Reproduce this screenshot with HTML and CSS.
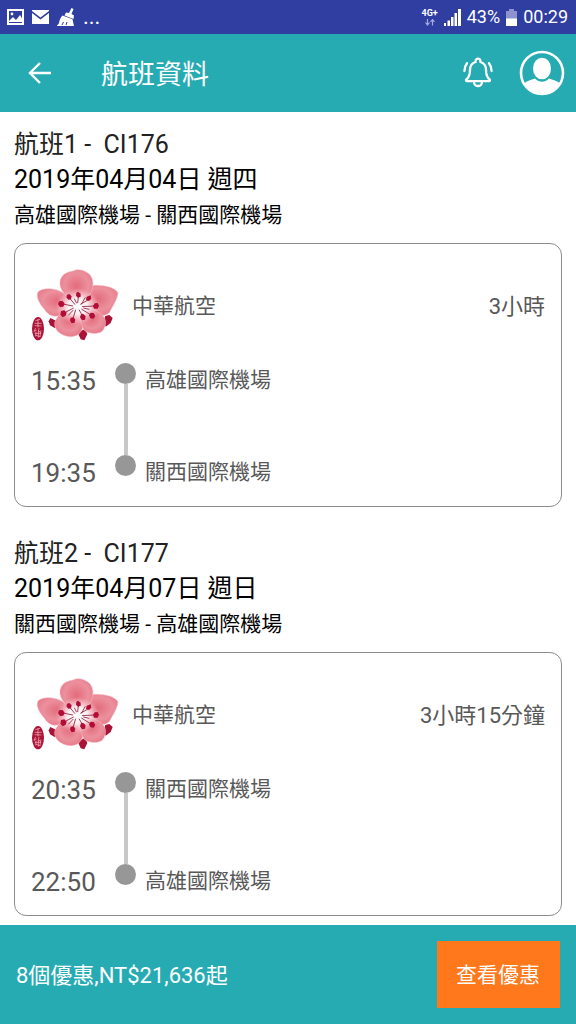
FILE: index.html
```html
<!DOCTYPE html>
<html lang="zh-Hant">
<head>
<meta charset="utf-8">
<meta name="viewport" content="width=device-width, initial-scale=1">
<title>航班資料</title>
<link rel="stylesheet" href="styles.css">
</head>
<body>
<svg class="defs" aria-hidden="true">
  <defs>
    <radialGradient id="petal" cx="50%" cy="45%" r="60%">
      <stop offset="0" stop-color="#e36c7c"/>
      <stop offset="0.6" stop-color="#ec909d"/>
      <stop offset="1" stop-color="#e67888"/>
    </radialGradient>
    <radialGradient id="heart" cx="50%" cy="50%" r="50%">
      <stop offset="0" stop-color="#fff"/>
      <stop offset="0.45" stop-color="#fff" stop-opacity="0.85"/>
      <stop offset="1" stop-color="#fbd5da" stop-opacity="0"/>
    </radialGradient>
    <symbol id="plum" viewBox="33 21 264 228">
      <g fill="#a81338">
        <path d="M91 174l17 8 5 16-9 6-14-8-4-12z"/>
        <path d="M256 168l12-3 10 9-6 15-15 11-7-14z"/>
        <path d="M173 217l22-10 7 15-9 19-11-3z"/>
      </g>
      <g fill="url(#petal)" stroke="#f6c3ca" stroke-width="1.500">
        <path d="M132 160C104 178 84 166 72 146C60 134 46 110 54 96C66 84 88 84 112 90C134 98 156 116 172 138Z"/>
        <path d="M172 138C180 104 196 84 222 76C246 76 280 78 294 98C292 120 278 138 268 158C252 172 226 166 208 158Z"/>
        <path d="M172 138C142 114 116 90 120 64C124 44 140 36 156 34C170 26 186 28 198 36C214 42 222 62 218 82C212 106 196 124 172 138Z"/>
        <path d="M172 140C142 142 112 160 104 188C102 208 118 222 138 228C162 234 180 226 188 204C192 182 186 156 172 140Z"/>
        <path d="M172 140C178 166 180 194 194 212C210 222 236 224 248 212C262 194 258 174 244 162C222 146 196 142 172 140Z"/>
      </g>
      <ellipse cx="173" cy="139" rx="66" ry="54" fill="url(#heart)"/>
      <g fill="none" stroke="#8d1c3d" stroke-width="2.500">
        <path d="M165 134L151 117M173 129L175 110M181 133L204 120M186 140L222 138M184 147L210 163M177 149L188 168M167 149L159 176M161 144L136 157M159 138L128 132M170 130L163 116M184 133L196 112M160 150L145 166M190 144L208 148"/>
      </g>
      <g fill="#b00d37">
        <path d="M148 102l7 7-2 9-8 1-6-7 2-8zM174 95l8 6v9l-8 3-6-6 1-9zM212 106l2 10-7 7-9-4 2-9z"/>
        <path d="M117 124l11-1 6 8-4 9-10 1-6-8zM233 129l4 8-4 9-11 0-3-8 5-8zM123 153l10-2 7 7-3 9-9 5-7-8z"/>
        <path d="M152 173l9-1 5 7-3 10-9 0-4-8zM189 161l8 8-2 10-9 2-6-9 3-9zM212 158l9 1 5 9-5 8-10-1-4-9z"/>
      </g>
      <ellipse cx="54" cy="206" rx="18" ry="35" fill="#ad1437"/>
      <path d="M46 182l14-4M44 190h21M54 178v24M44 197l20 1M47 204l-5 10 8-4M57 204l-2 12 9-3M44 220h20M48 215l-1 14M55 216v17M62 215l-2 15M47 226l14 4" fill="none" stroke="#f3bcc6" stroke-width="2"/>
    </symbol>
  </defs>
</svg>

<div class="screen">
  <div class="status">
    <div class="status-side">
      <svg width="17" height="16" viewBox="0 0 17 16"><rect x="1" y="1" width="15" height="14" fill="none" stroke="#fff" stroke-width="2"/><path d="M2 12l4-4 3 3 4-5 3 5v2H2z" fill="#fff"/><circle cx="5" cy="5" r="1.4" fill="#fff"/></svg>
      <svg width="17" height="14" viewBox="0 0 17 14"><path d="M0 0h17v1L8.500 7.500 0 1zM0 3l8.500 6.500L17 3v11H0z" fill="#fff"/></svg>
      <svg width="18" height="18" viewBox="0 0 18 18"><path d="M14.500 0l2 1-2 5 2.500 1.500-.5 3.500-9-3.500L9 4.500l3 .6zM5.500 7.500l10 3.700 1.500 6.800H0c0-1 1.500-1.500 2-3 .5-3 1.500-5.500 3.500-7.500z" fill="#fff"/><path d="M5 17l1.500-3M9 17l1-3" stroke="#303ea2"/></svg>
      <span class="more">...</span>
    </div>
    <div class="status-side status-right">
      <div class="network"><span>4G+</span>
        <svg width="10" height="7" viewBox="0 0 10 7"><path d="M2.500 0v5M.5 3.500l2 2.500 2-2.500M7.500 6.500V1M5.500 3l2-2.500 2 2.500" fill="none" stroke="#a4abe0" stroke-width="1.200"/></svg>
      </div>
      <svg width="17" height="17" viewBox="0 0 17 17"><path d="M0 14h2v3H0zM3.500 11.500h2.500V17H3.500zM7 8h2.500v9H7zM10.500 4H13v13h-2.500zM14 0h3v17h-3z" fill="#fff"/></svg>
      <span>43%</span>
      <svg width="11" height="17" viewBox="0 0 11 17"><path d="M3 0h5v2h3v15H0V2h3z" fill="#8d93cf"/><path d="M0 9.500h11V17H0z" fill="#fff"/></svg>
      <span>00:29</span>
    </div>
  </div>

  <header class="bar">
    <button class="icon-btn" aria-label="返回"><svg width="24" height="22" viewBox="0 0 24 22"><path d="M23 11H2M12 1L2 11l10 10" fill="none" stroke="#fff" stroke-width="2.400"/></svg></button>
    <h1 class="bar-title">航班資料</h1>
    <button class="icon-btn" aria-label="通知"><svg width="30" height="32" viewBox="0 0 30 32" fill="none" stroke="#fff" stroke-width="2.300" stroke-linecap="round" stroke-linejoin="round"><path d="M12.600 5V4a2.400 2.400 0 0 1 4.800 0v1c3.600 1 5.600 4 5.600 8 0 5 1 7.500 3.700 9.500.6.700.3 1.700-.8 1.700H4.100c-1.100 0-1.400-1-.8-1.700C6 20.500 7 18 7 13c0-4 2-7 5.600-8z"/><path d="M11 25a4 4 0 0 0 8 0M4 6.200C2.500 8 1.500 10.500 1.400 14M26 6.200c1.500 1.800 2.500 4.300 2.600 7.800"/></svg></button>
    <button class="icon-btn avatar" aria-label="會員"><svg width="46" height="46" viewBox="0 0 46 46"><circle cx="23" cy="23" r="21" fill="none" stroke="#fff" stroke-width="2.600"/><ellipse cx="23" cy="18.500" rx="9" ry="10.800" fill="#fff"/><path d="M5 33.500c3-2.500 7-3.700 11-5 2.200 2.200 4.500 3.200 7 3.200s4.800-1 7-3.200c4 1.300 8 2.500 11 5A21 21 0 0 1 5 33.500z" fill="#fff"/></svg></button>
  </header>

  <main class="content">
    <section class="flight">
      <h2 class="flight-no">航班1 -&nbsp; CI176</h2>
      <p class="flight-date">2019年04月04日 週四</p>
      <p class="flight-route">高雄國際機場 - 關西國際機場</p>
      <article class="card">
        <div class="card-head">
          <svg class="logo" role="img" aria-label="中華航空"><use href="#plum"/></svg>
          <span class="airline">中華航空</span>
          <span class="duration">3小時</span>
        </div>
        <ol class="stops">
          <li class="stop"><time class="time">15:35</time><span class="rail"></span><span class="place">高雄國際機場</span></li>
          <li class="stop"><time class="time">19:35</time><span class="rail"></span><span class="place">關西國際機場</span></li>
        </ol>
      </article>
    </section>

    <section class="flight">
      <h2 class="flight-no">航班2 -&nbsp; CI177</h2>
      <p class="flight-date">2019年04月07日 週日</p>
      <p class="flight-route">關西國際機場 - 高雄國際機場</p>
      <article class="card">
        <div class="card-head">
          <svg class="logo" role="img" aria-label="中華航空"><use href="#plum"/></svg>
          <span class="airline">中華航空</span>
          <span class="duration">3小時15分鐘</span>
        </div>
        <ol class="stops">
          <li class="stop"><time class="time">20:35</time><span class="rail"></span><span class="place">關西國際機場</span></li>
          <li class="stop"><time class="time">22:50</time><span class="rail"></span><span class="place">高雄國際機場</span></li>
        </ol>
      </article>
    </section>
  </main>

  <footer class="footer">
    <span class="offer">8個優惠,NT$21,636起</span>
    <button class="cta">查看優惠</button>
  </footer>
</div>
</body>
</html>
```

FILE: styles.css
```css
* {
  box-sizing: border-box;
}

body {
  margin: 0;
  background: #fff;
  color: #222;
  font-family: Roboto, "Noto Sans CJK TC", sans-serif;
}

h1, h2, p, ol {
  margin: 0;
  padding: 0;
  font-weight: 400;
}

svg {
  display: block;
  flex: none;
}

button {
  margin: 0;
  padding: 0;
  border: 0;
  background: none;
  font-family: inherit;
  cursor: pointer;
}

.defs {
  position: absolute;
  width: 0;
  height: 0;
}

.screen {
  display: flex;
  flex-direction: column;
  min-height: 100vh;
}

.status {
  display: flex;
  justify-content: space-between;
  height: 34px;
  padding: 0 8px 0 7px;
  background: #303ea2;
  color: #fff;
  font-size: 18px;
  line-height: 34px;
}

.status-side {
  display: flex;
  align-items: center;
  gap: 8px;
}

.status-right {
  gap: 6px;
}

.more {
  font-size: 22px;
}

.network {
  display: flex;
  flex-direction: column;
  align-items: center;
  gap: 1px;
  font-size: 9px;
  font-weight: 700;
  line-height: 9px;
}

.bar {
  display: flex;
  align-items: center;
  height: 78px;
  padding: 0 11px 0 28px;
  background: #26abb2;
  color: #fff;
}

.bar-title {
  flex: 1;
  padding: 4px 0 0 49px;
  font-size: 27px;
  line-height: 40px;
}

.avatar {
  margin-left: 26px;
}

.content {
  flex: 1;
  display: flex;
  flex-direction: column;
  gap: 30px;
  padding: 16px 14px 9px;
}

.flight-no,
.flight-date {
  font-size: 25px;
}

.flight-no {
  line-height: 34px;
}

.flight-date {
  color: #000;
  line-height: 35px;
}

.flight-route {
  margin-bottom: 10px;
  color: #000;
  font-size: 21px;
  line-height: 36px;
}

.card {
  padding: 23px 16px 15px;
  border: 1px solid #8c8c8c;
  border-radius: 12px;
  color: #585858;
}

.card-head {
  display: flex;
  align-items: center;
  gap: 13px;
  margin-bottom: 20px;
}

.logo {
  width: 88px;
  height: 76px;
}

.airline,
.duration {
  padding-bottom: 3px;
}

.airline {
  flex: 1;
  font-size: 21px;
}

.duration {
  font-size: 22px;
}

.stops {
  list-style: none;
}

.stop {
  display: grid;
  grid-template-columns: 75px 21px 1fr;
  column-gap: 9px;
}

.stop:first-child {
  min-height: 92px;
}

.time {
  font-size: 26px;
  line-height: 36px;
}

.rail {
  display: flex;
  flex-direction: column;
  align-items: center;
}

.rail::before {
  content: "";
  width: 21px;
  height: 21px;
  border-radius: 50%;
  background: #979797;
}

.stop:first-child .rail::after {
  content: "";
  flex: 1;
  width: 4px;
  background: #c8c8c8;
}

.place {
  font-size: 21px;
  line-height: 34px;
}

.footer {
  display: flex;
  align-items: center;
  justify-content: space-between;
  min-height: 99px;
  padding: 0 16px;
  background: #26abb2;
  color: #fff;
}

.offer {
  padding-bottom: 3px;
  font-size: 22px;
}

.cta {
  padding: 17px 20px 15px 19px;
  background: #ff781c;
  color: #fff;
  font-size: 21px;
  line-height: 35px;
}
```
